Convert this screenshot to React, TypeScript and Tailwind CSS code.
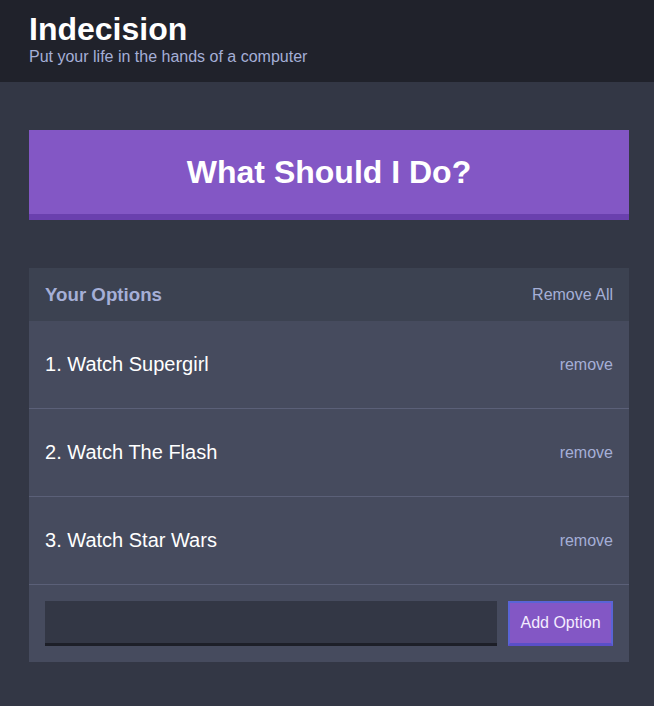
import React from "react";

const options = ["Watch Supergirl", "Watch The Flash", "Watch Star Wars"];

export default function App() {
  return (
    <div
      className="min-h-[706px] bg-[#333745]"
      style={{ fontFamily: '"Liberation Sans", Arial, sans-serif' }}
    >
      <header className="bg-[#20222b] pt-[11px] pb-[16px]">
        <div className="ml-[29px] w-[600px]">
          <h1 className="m-0 text-[32px] font-bold leading-[36px] text-white">Indecision</h1>
          <h2 className="m-0 text-[16px] font-normal leading-[19px] text-[#a5afd7]">
            Put your life in the hands of a computer
          </h2>
        </div>
      </header>
      <main className="ml-[29px] w-[600px] pt-[48px]">
        <button className="block w-full bg-[#8357c5] border-b-[6px] border-[#6a40ae] py-[24px] text-[32px] font-bold leading-[36px] text-white">
          What Should I Do?
        </button>
        <section className="mt-[48px] bg-[#464b5e]">
          <div className="flex items-center justify-between bg-[#3c4251] p-[16px]">
            <h3 className="m-0 text-[18.7px] font-bold leading-[21px] text-[#a5afd7]">Your Options</h3>
            <button className="text-[16px] leading-[18px] text-[#a5afd7]">Remove All</button>
          </div>
          {options.map((o, i) => (
            <div
              key={o}
              className="flex items-center justify-between border-b border-[#5b6078] px-[16px] py-[32px]"
            >
              <p className="m-0 text-[20px] leading-[23px] text-white">
                {i + 1}. {o}
              </p>
              <button className="text-[16px] leading-[18px] text-[#a5afd7]">remove</button>
            </div>
          ))}
          <form className="flex p-[16px]" onSubmit={(e) => e.preventDefault()}>
            <input
              className="mr-[11px] h-[45px] flex-1 border-b-[3px] border-[#1d1f28] bg-[#333745] px-[12px] text-[#a5afd7] outline-none"
              type="text"
            />
            <button className="h-[45px] w-[105px] border-2 border-[#5a64d6] border-b-[3px] border-b-[#5a4fc8] bg-[#8357c5] text-[16px] text-[#f3ecff]">
              Add Option
            </button>
          </form>
        </section>
      </main>
    </div>
  );
}
